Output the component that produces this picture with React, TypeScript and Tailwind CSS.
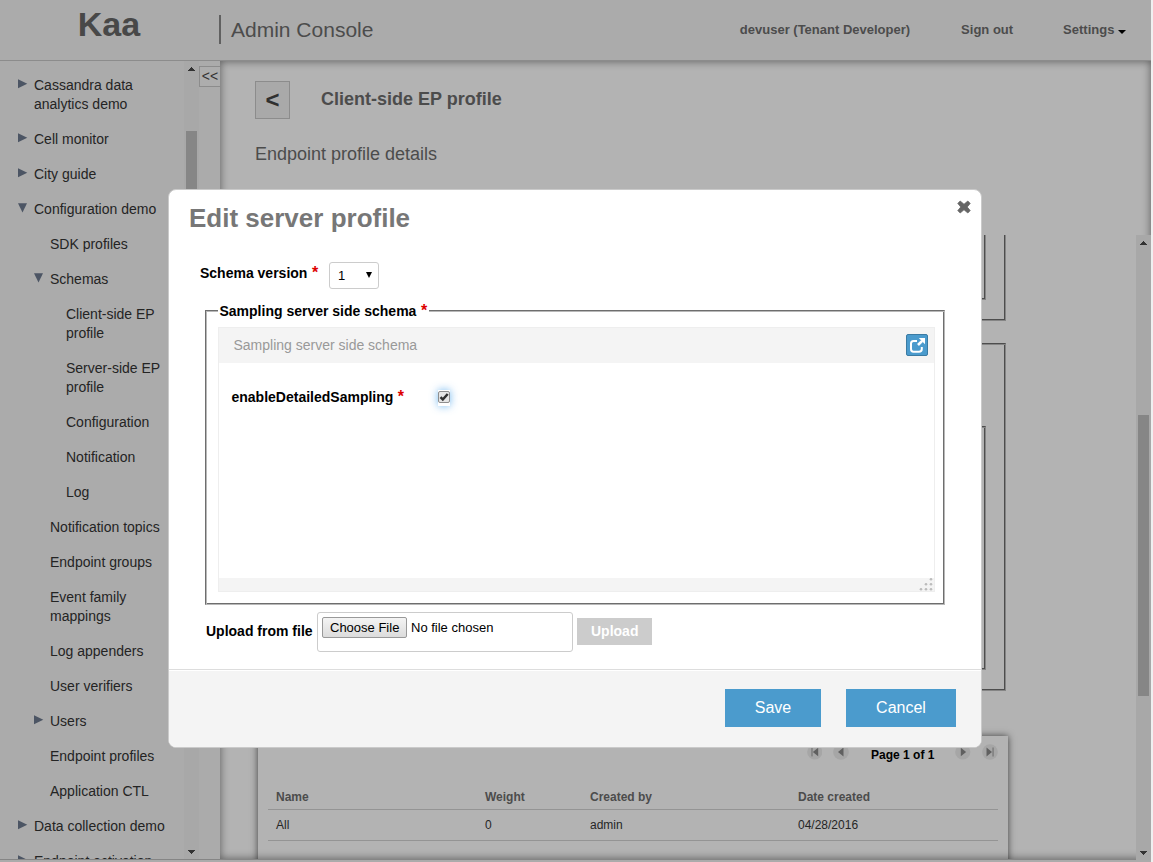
import React from "react";

type Node = { label: string; level: 0 | 1 | 2; state?: "open" | "closed" };

const nodes: Node[] = [
  { label: "Cassandra data analytics demo", level: 0, state: "closed" },
  { label: "Cell monitor", level: 0, state: "closed" },
  { label: "City guide", level: 0, state: "closed" },
  { label: "Configuration demo", level: 0, state: "open" },
  { label: "SDK profiles", level: 1 },
  { label: "Schemas", level: 1, state: "open" },
  { label: "Client-side EP profile", level: 2 },
  { label: "Server-side EP profile", level: 2 },
  { label: "Configuration", level: 2 },
  { label: "Notification", level: 2 },
  { label: "Log", level: 2 },
  { label: "Notification topics", level: 1 },
  { label: "Endpoint groups", level: 1 },
  { label: "Event family mappings", level: 1 },
  { label: "Log appenders", level: 1 },
  { label: "User verifiers", level: 1 },
  { label: "Users", level: 1, state: "closed" },
  { label: "Endpoint profiles", level: 1 },
  { label: "Application CTL", level: 1 },
  { label: "Data collection demo", level: 0, state: "closed" },
  { label: "Endpoint activation", level: 0, state: "closed" },
];

const indent = ["pl-[18px]", "pl-[34px]", "pl-[50px]"];
const labelWidth = ["w-[134px]", "w-[114px]", "w-[100px]"];

/* Two-tone 2px groove: dark outside on top/left, dark inside on bottom/right */
const dimGroove =
  "border border-t-[#4d4d4d] border-l-[#4d4d4d] border-r-[#858585] border-b-[#858585] shadow-[inset_1px_1px_0_#858585,inset_-1px_-1px_0_#4d4d4d]";
const dimGrooveOpen =
  "border border-t-0 border-l-[#4d4d4d] border-r-[#858585] border-b-[#858585] shadow-[inset_-1px_-1px_0_#4d4d4d]";
const groove =
  "border border-t-[#6e6e6e] border-l-[#6e6e6e] border-r-[#b8b8b8] border-b-[#b8b8b8] shadow-[inset_1px_1px_0_#b8b8b8,inset_-1px_-1px_0_#6e6e6e]";

function TreeItem({ label, level, state }: Node) {
  return (
    <li className={`flex py-2 ${indent[level]}`}>
      <svg className="mt-[3px] h-[10px] w-4 shrink-0" viewBox="0 0 16 10" fill="#4c5564">
        {state === "closed" && <path d="M0 0.3L9.3 4.8L0 9.2Z" />}
        {state === "open" && <path d="M0 0.2H9L4.5 9.5Z" />}
      </svg>
      <span className={labelWidth[level]}>{label}</span>
    </li>
  );
}

function Arrow({ up }: { up?: boolean }) {
  return (
    <svg className="h-[15px] w-[15px] shrink-0" viewBox="0 0 15 15" fill="#333" shapeRendering="crispEdges">
      {up ? <path d="M4 10H11L7.5 6Z" /> : <path d="M4 6H11L7.5 10Z" />}
    </svg>
  );
}

function PagerIcon({ d, bar }: { d: string; bar?: number }) {
  return (
    <svg className="h-4 w-4" viewBox="0 0 16 16">
      <circle cx="8" cy="8" r="7.8" fill="#a6a6a6" />
      <path d={d} fill="#606060" />
      {bar !== undefined && <rect x={bar} y="3.5" width="1.3" height="9" fill="#777" />}
    </svg>
  );
}

function Star() {
  return <span className="ml-[4.5px] text-base leading-4 font-bold text-[#dd0000]">*</span>;
}

function Page() {
  return (
    <div className="flex h-[862px] w-[1151px] flex-col bg-[#ababab]">
      <header className="flex h-[61px] shrink-0 border-b border-[#8c8c8c] text-[#4c4c4c]">
        <div className="mr-px w-[218px] pt-[4px] text-center text-[34px] leading-[40px] font-bold text-[#484848]">Kaa</div>
        <div className="mt-[15px] h-[29px] w-[2px] bg-[#606060]" />
        <div className="ml-[10px] pt-[15px] text-[21px] leading-[30px]">Admin Console</div>
        <nav className="ml-auto flex items-start pt-[21px] pr-[24.6px] text-[13px] leading-[18px] font-bold">
          <span className="mr-[51px]">devuser (Tenant Developer)</span>
          <span className="mr-[50px]">Sign out</span>
          <span className="flex items-center">
            Settings
            <svg className="ml-1 mt-[3px] h-[4px] w-2" viewBox="0 0 8 4"><path d="M0 0H8L4 4Z" fill="#000" /></svg>
          </span>
        </nav>
      </header>
      <div className="flex h-[798px] shrink-0">
        <aside className="flex w-[220px] shrink-0">
          <ul className="h-[798px] w-[184px] overflow-hidden pt-[7px] text-sm leading-[19px] text-[#242424]">
            {nodes.map((n) => <TreeItem key={n.label} {...n} />)}
          </ul>
          <div className="flex w-[15px] flex-col bg-[#a8a8a8]">
            <Arrow up />
            <div className="mx-[2px] mt-[55px] h-[260px] bg-[#868686]" />
            <div className="mt-auto"><Arrow /></div>
          </div>
          <div className="mt-[5px] h-[21px] w-[21px] border border-r-0 border-[#8c8c8c] bg-[#adadad] text-center text-sm leading-[19px] text-[#333]">&lt;&lt;</div>
        </aside>
        <main className="flex flex-1 flex-col bg-[#b3b3b3] shadow-[inset_0_0_8px_rgba(0,0,0,0.5)]">
          <div className="flex h-[174px] shrink-0 flex-col pl-[35px] text-[18px] leading-6 text-[#4c4c4c]">
            <div className="mt-5 flex items-center">
              <div className="h-[38px] w-[35px] border border-[#8c8c8c] bg-[#a9a9a9] text-center text-[24px] leading-[36px] font-bold text-[#303030]">&lt;</div>
              <h2 className="ml-[31px] pb-[2px] font-bold">Client-side EP profile</h2>
            </div>
            <p className="mt-[23px]">Endpoint profile details</p>
          </div>
          <div className="flex h-[624px]">
            <div className="h-[624px] w-[916px] overflow-hidden pl-[37px]">
              <div className={`h-[86px] w-[749px] pr-[19px] pl-4 ${dimGrooveOpen}`}>
                <div className={`h-[65px] ${dimGrooveOpen}`} />
              </div>
              <div className={`mt-[22px] h-[348px] w-[749px] pt-[82px] pr-[19px] pl-4 ${dimGroove}`}>
                <div className={`h-[244px] ${dimGroove}`} />
              </div>
              <section className="mt-[45px] ml-px h-[150px] w-[750px] px-[10px] text-xs text-[#262626] shadow-[0_0_7px_rgba(0,0,0,0.65)]">
                <div className="flex h-[48px] items-start pt-2 pl-[538.5px]">
                  <PagerIcon d="M11.5 3.5V12.5L6 8Z" bar={4.5} />
                  <span className="ml-[11px]"><PagerIcon d="M10.5 3.5V12.5L5 8Z" /></span>
                  <span className="mt-[3px] ml-[22px] w-[87px] leading-4 font-bold text-black">Page 1 of 1</span>
                  <PagerIcon d="M6 3.5V12.5L11.5 8Z" />
                  <span className="ml-[11px]"><PagerIcon d="M4.5 3.5V12.5L10 8Z" bar={10.4} /></span>
                </div>
                <div className="grid h-[26px] grid-cols-[209px_105px_208px_1fr] items-center border-b border-[#949494] pl-2 font-bold text-[#4c4c4c]">
                  <span>Name</span><span>Weight</span><span>Created by</span><span>Date created</span>
                </div>
                <div className="grid h-[31px] grid-cols-[209px_105px_208px_1fr] items-center border-b border-[#949494] pl-2">
                  <span>All</span><span>0</span><span>admin</span><span>04/28/2016</span>
                </div>
              </section>
            </div>
            <div className="-mb-px flex w-[15px] flex-col bg-[#a8a8a8]">
              <Arrow up />
              <div className="mx-[2px] mt-[165px] h-[281px] bg-[#868686]" />
              <div className="mt-auto"><Arrow /></div>
            </div>
          </div>
        </main>
      </div>
      <div className="mr-[15px] h-px shrink-0 bg-[#858585]" />
    </div>
  );
}

function Dialog() {
  return (
    <div className="absolute top-[189px] left-[168px] flex h-[559px] w-[814px] flex-col overflow-hidden rounded-[8px] border border-[#cacaca] bg-white text-sm text-black">
      <div className="flex h-[72px] shrink-0 justify-between pr-[10px] pl-5">
        <h1 className="pt-[12px] text-[26px] leading-8 font-bold text-[#777]">Edit server profile</h1>
        <svg className="mt-[10px] h-[14px] w-[14px]" viewBox="0 0 14 14">
          <path
            d="M3.2 1L7 4.3L10.8 1L13.2 3.4L10.2 7L13.2 10.6L10.8 13L7 9.7L3.2 13L0.8 10.6L3.8 7L0.8 3.4Z"
            fill="#666"
            stroke="#666"
            strokeWidth="0.8"
            strokeLinejoin="round"
          />
        </svg>
      </div>
      <div className="flex h-[27px] shrink-0 pl-[31px]">
        <label className="w-[129px] leading-[22px] font-bold">Schema version<Star /></label>
        <div className="flex w-[50px] items-center justify-between rounded-[3px] border border-[#ccc] pt-[2px] pr-[6px] pl-2 text-[13px]">
          1
          <svg className="-mt-[4px] h-[6px] w-[6px]" viewBox="0 0 6 6"><path d="M0 0H6L3 6Z" /></svg>
        </div>
      </div>
      <div className={`mt-[21px] ml-[36px] h-[295px] w-[740px] shrink-0 pl-[12px] ${groove}`}>
        <div className="-mt-[10px] h-[18px] w-[211px] bg-white pl-[1.5px] leading-[20px] font-bold whitespace-nowrap">Sampling server side schema<Star /></div>
        <div className="mt-[8px] flex h-[265px] w-[717px] flex-col border border-[#eee]">
          <div className="flex h-[35px] items-start justify-between bg-[#f4f4f4] pr-[6px] pl-[14.5px] leading-[34px] text-[#999]">
            Sampling server side schema
            <svg className="mt-[6px] h-[22px] w-[22px]" viewBox="0 0 22 22" fill="none">
              <rect x="0.5" y="0.5" width="21" height="21" rx="1.5" fill="#4b9bcd" stroke="#3b7ba3" />
              <path d="M11 7H7.5Q5 7 5 9.5V15Q5 17.8 7.5 17.8H13Q15.8 17.8 15.8 15V13" stroke="#fff" strokeWidth="2" />
              <path d="M12 11L16.2 6.8" stroke="#fff" strokeWidth="2.6" />
              <path d="M12.8 4H19V10.2Z" fill="#fff" />
            </svg>
          </div>
          <div className="flex flex-1 pt-[25px] pl-[12.5px]">
            <label className="w-[206px] leading-[18px] font-bold">enableDetailedSampling<Star /></label>
            <div className="mt-[2px] h-4 w-3 bg-white pt-px shadow-[0_0_8px_rgba(82,168,236,0.8)]">
              <svg className="h-3 w-3" viewBox="0 0 12 12" fill="none">
                <rect x="0.5" y="0.5" width="11" height="11" rx="1.5" fill="#e6e6e6" stroke="#8e8e8e" />
                <path d="M2.5 6.2L4.8 8.5L9.7 3" stroke="#303030" strokeWidth="2.5" />
              </svg>
            </div>
          </div>
          <div className="flex h-[13px] justify-end bg-[#f4f4f4]">
            <svg className="mr-px h-[13px] w-[14px]" viewBox="0 0 14 13" fill="#bcbcbc">
              <circle cx="12" cy="1.3" r="1.3" /><circle cx="7" cy="6.3" r="1.3" /><circle cx="12" cy="6.3" r="1.3" />
              <circle cx="2" cy="11.3" r="1.3" /><circle cx="7" cy="11.3" r="1.3" /><circle cx="12" cy="11.3" r="1.3" />
            </svg>
          </div>
        </div>
      </div>
      <div className="mt-[7px] flex h-[40px] shrink-0 pl-[37px]">
        <label className="w-[111px] leading-[38px] font-bold">Upload from file</label>
        <div className="flex w-[256px] items-start rounded-[3px] border border-[#ccc] p-1 text-[13px] leading-[19px]">
          <div className="h-[21px] w-[85px] rounded-[2px] border border-[#999] bg-linear-to-b from-[#f4f4f4] to-[#dcdcdc] pl-[7px] whitespace-nowrap">Choose File</div>
          <span className="ml-1 pt-px">No file chosen</span>
        </div>
        <div className="mt-[6px] ml-1 h-[27px] w-[75px] bg-[#ccc] pl-[14px] leading-[27px] font-bold text-white">Upload</div>
      </div>
      <footer className="mt-[17px] flex flex-1 flex-col border-t border-[#ddd] pt-px">
        <div className="flex flex-1 justify-end gap-[25px] bg-[#f4f4f4] pt-[18px] pr-[25px] text-base leading-[38px] text-white">
          <div className="h-[38px] w-[96px] bg-[#4b9bcd] text-center">Save</div>
          <div className="h-[38px] w-[110px] bg-[#4b9bcd] text-center">Cancel</div>
        </div>
      </footer>
    </div>
  );
}

export default function App() {
  return (
    <div className="relative h-[862px] w-[1153px] overflow-hidden bg-[#f0f0f0] font-['Liberation_Sans',Arial,sans-serif]">
      <Page />
      <Dialog />
    </div>
  );
}
